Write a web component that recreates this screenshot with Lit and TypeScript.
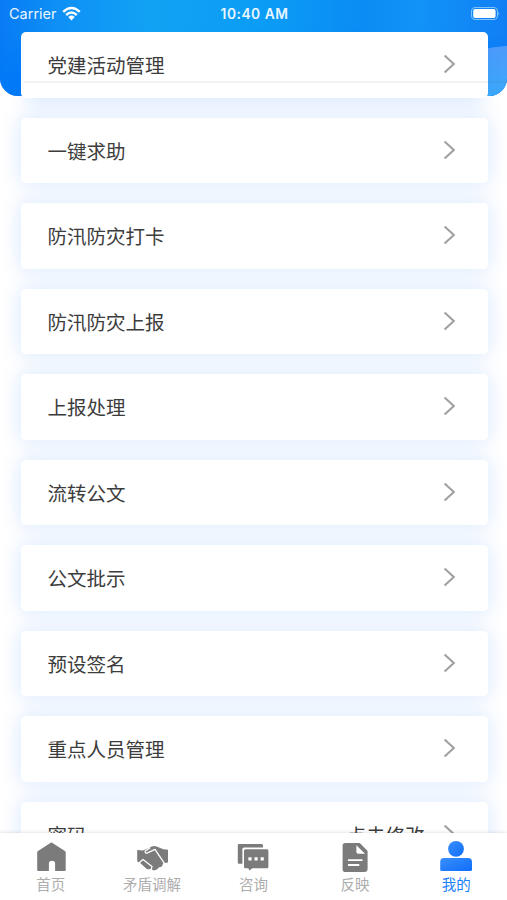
import { LitElement, html, svg, css } from "lit";
import { customElement } from "lit/decorators.js";
import { classMap } from "lit/directives/class-map.js";

interface Row {
  label: string;
  action?: string;
}

const rows: Row[] = [
  { label: "党建活动管理" },
  { label: "一键求助" },
  { label: "防汛防灾打卡" },
  { label: "防汛防灾上报" },
  { label: "上报处理" },
  { label: "流转公文" },
  { label: "公文批示" },
  { label: "预设签名" },
  { label: "重点人员管理" },
  { label: "密码", action: "点击修改" },
];

const icons = {
  home: svg`<path fill="#7b7b7b" d="M16.7 2.4 29.9 11Q30.7 11.6 30.7 12.6V30Q30.7 31 29.7 31H20.1V23.6Q20.1 20.8 17 20.8T13.9 23.6V31H3.2Q2.2 31 2.2 30V12.6Q2.2 11.6 3 11L15.7 2.8Q16.2 2.3 16.7 2.4Z"/>`,
  hands: svg`
    <path fill="#7b7b7b" d="M1.2 10 6.9 10.6 15.9 6.6Q17.9 5.7 19.9 6.2L27.4 9.2 32 9.8V22.4L27.2 23.2 25.9 26.6 22.9 27.6 20.8 29.4 17.8 30.4 14.9 29 11.4 29.4 3 22.4 1.2 21.6Z"/>
    <path fill="none" stroke="#fff" stroke-width="1.3" stroke-linejoin="round" d="M14.2 7.6 9.2 11Q9 13.4 11 13.2L19 9.4 28.6 23.6"/>
    <path fill="none" stroke="#fff" stroke-width="1.3" stroke-linejoin="round" d="M2.4 23.4 7 19.4 16 26.6 14.6 31"/>
    <path fill="#fff" d="M0 22.2 3.8 22.8 11 29.4 15.4 29.8V32H0Z"/>`,
  chat: svg`
    <path fill="#7b7b7b" d="M2 4H24.5Q26 4 26 5.5V7.4H7Q5.4 7.4 5.4 9V23.8H2Q.8 23.8.8 22.4V5.3Q.8 4 2 4Z"/>
    <path fill="#7b7b7b" d="M8.5 9.3H30Q31.4 9.3 31.4 10.8V26.8Q31.4 28.3 30 28.3H15.4L12.2 30.6 11.4 28.3H8.5Q7 28.3 7 26.8V10.8Q7 9.3 8.5 9.3Z"/>
    <path fill="#fff" d="M11.4 17.2h3.2v3.2h-3.2zm6.1 0h3.2v3.2h-3.2zm6.1 0h3.2v3.2h-3.2z"/>`,
  page: svg`
    <path fill="#7b7b7b" d="M6.3 3H20.8L28.6 11V28.8Q28.6 32 25.4 32H6.3Q3.6 32 3.6 29.2V5.8Q3.6 3 6.3 3Z"/>
    <path fill="#fff" d="M17.4 5.2 26 13.8H19.2Q17.4 13.8 17.4 12Z"/>
    <path stroke="#fff" stroke-width="1.8" stroke-linecap="round" d="M9.7 20.2H22.8M9.7 25H19.6"/>`,
  user: svg`
    <defs><linearGradient id="person" x1="0" y1="0" x2="1" y2="1"><stop offset="0" stop-color="#3a8ffb"/><stop offset="1" stop-color="#0f6dfb"/></linearGradient></defs>
    <circle cx="16" cy="8.8" r="7.9" fill="url(#person)"/>
    <path fill="url(#person)" d="M4 18H28Q32 18 32 22V29.5Q32 31 30.4 31H1.6Q.2 31 .2 29.5V22Q.2 18 4 18Z"/>`,
};

const tabs = [
  { label: "首页", icon: icons.home },
  { label: "矛盾调解", icon: icons.hands },
  { label: "咨询", icon: icons.chat },
  { label: "反映", icon: icons.page },
  { label: "我的", icon: icons.user, active: true },
];

@customElement("menu-card")
class MenuCard extends LitElement {
  static properties = { label: {}, action: {} };
  declare label: string;
  declare action?: string;

  static styles = css`
    :host {
      display: flex;
      flex: none;
      align-items: center;
      box-sizing: border-box;
      height: 65.5px;
      padding: 1px 29px 0 27px;
      border-radius: 5px;
      background: #fff;
      color: #3c3c3c;
      font-size: 19.5px;
      line-height: 28px;
    }
    .label {
      flex: 1;
    }
    .action {
      margin-right: 18px;
    }
    .arrow {
      width: 16px;
      height: 20px;
      margin-top: -2px;
      fill: none;
      stroke: #a0a0a0;
      stroke-width: 2.1;
    }
  `;

  render() {
    return html`
      <span class="label">${this.label}</span>
      ${this.action ? html`<span class="action">${this.action}</span>` : ""}
      <svg class="arrow" viewBox="0 0 16 20"><path d="M1.6 1.5 10.8 10 1.6 18.5" /></svg>
    `;
  }
}

@customElement("app-root")
class AppRoot extends LitElement {
  static styles = css`
    :host {
      display: flex;
      flex-direction: column;
      position: relative;
      height: 900px;
      overflow: hidden;
      background: #fff;
      font-family: "Noto Sans CJK SC", sans-serif;
    }
    .banner {
      position: absolute;
      inset: 0 0 auto 0;
      width: 100%;
      height: 96px;
      border-radius: 0 0 18px 18px;
    }
    .status {
      position: relative;
      display: grid;
      grid-template-columns: 1fr auto 1fr;
      align-items: center;
      flex: none;
      height: 28px;
      padding: 0 7px 0 9px;
      color: #e9f6ff;
      font: 14.5px/28px Inter, sans-serif;
    }
    .carrier {
      display: flex;
      align-items: center;
      gap: 5px;
    }
    .wifi {
      width: 19px;
      height: 15px;
      margin-top: -2px;
    }
    .time {
      font-weight: 600;
      font-size: 13.8px;
      letter-spacing: 0.5px;
    }
    .battery {
      justify-self: end;
      width: 31px;
      height: 16px;
    }
    .list {
      position: relative;
      display: flex;
      flex-direction: column;
      flex: 1;
      min-height: 0;
      gap: 20px;
      padding: 4px 19.5px 0 20.5px;
      overflow: hidden;
    }
    .slot {
      position: relative;
      flex: none;
    }
    .halo {
      position: absolute;
      inset: 0;
      border-radius: 5px;
      box-shadow: 0 0 20px 2px rgba(10, 110, 245, 0.14);
    }
    .first .halo {
      box-shadow: 0 10px 18px -4px rgba(10, 110, 245, 0.14);
    }
    .slot menu-card {
      position: relative;
      z-index: 1;
    }
    .rule {
      position: absolute;
      z-index: 2;
      top: 48.5px;
      left: 3px;
      right: -20px;
      height: 2px;
      background: rgba(90, 90, 100, 0.07);
    }
    .tabs {
      position: relative;
      z-index: 3;
      display: grid;
      grid-template-columns: repeat(5, 1fr);
      flex: none;
      height: 67.5px;
      background: #fff;
      box-shadow: 0 -1px 3px rgba(0, 0, 0, 0.1);
    }
    .tab {
      display: flex;
      flex-direction: column;
      align-items: center;
      padding-top: 7.5px;
      color: #adadad;
      font-size: 14.5px;
      line-height: 20px;
    }
    .tab.active {
      color: #1a82fa;
    }
    .icon {
      width: 32px;
      height: 34px;
    }
  `;

  render() {
    return html`
      <svg class="banner" viewBox="0 0 507 96" preserveAspectRatio="none">
        <defs>
          <linearGradient id="sky">
            <stop offset="0" stop-color="#087bf5" />
            <stop offset=".12" stop-color="#0e91f6" />
            <stop offset=".3" stop-color="#12a2f4" />
            <stop offset=".52" stop-color="#0b9cf5" />
            <stop offset=".72" stop-color="#0a8cf4" />
            <stop offset=".83" stop-color="#1193f8" />
            <stop offset="1" stop-color="#117ff4" />
          </linearGradient>
          <linearGradient id="depth" x1="0" y1="0" x2="0" y2="1">
            <stop offset=".35" stop-color="#0078f8" stop-opacity="0" />
            <stop offset=".8" stop-color="#0078f8" stop-opacity=".75" />
          </linearGradient>
          <linearGradient id="wave" x1="0" y1="0" x2="0" y2="1">
            <stop offset="0" stop-color="#4c9afa" />
            <stop offset="1" stop-color="#3ba9fa" />
          </linearGradient>
        </defs>
        <path fill="url(#sky)" d="M0 0H507V96H0Z" />
        <path fill="url(#depth)" d="M0 0H507V96H0Z" />
        <path fill="url(#wave)" d="M460 55Q485 47 507 46V96H460Z" />
      </svg>
      <div class="status">
        <span class="carrier">
          Carrier
          <svg class="wifi" viewBox="0 0 19 15">
            <path fill="none" stroke="#fff" stroke-width="2.4" d="M1.2 5.9Q9.5-1.8 17.8 5.9M4.2 9Q9.5 4.2 14.8 9" />
            <path fill="#fff" d="M6.3 11Q9.5 8.2 12.7 11L9.5 14.4Z" />
          </svg>
        </span>
        <span class="time">10:40 AM</span>
        <svg class="battery" viewBox="0 0 31 16">
          <rect x="2.5" y="1.5" width="26" height="12" rx="3.5" fill="none" stroke="#7fc3fb" />
          <rect x="4.2" y="3.1" width="22.4" height="8.8" rx="2" fill="#fff" />
          <path fill="#7fc3fb" d="M29.5 5.5Q31 7.5 29.5 9.5Z" />
        </svg>
      </div>
      <div class="list">
        ${rows.map(
          (row, i) => html`<div class=${classMap({ slot: true, first: i === 0 })}>
            <div class="halo"></div>
            <menu-card .label=${row.label} .action=${row.action}></menu-card>
            ${i === 0 ? html`<div class="rule"></div>` : ""}
          </div>`
        )}
      </div>
      <nav class="tabs">
        ${tabs.map(
          (tab) => html`<div class=${classMap({ tab: true, active: !!tab.active })}>
            <svg class="icon" viewBox="0 0 32 34">${tab.icon}</svg>
            <span>${tab.label}</span>
          </div>`
        )}
      </nav>
    `;
  }
}
